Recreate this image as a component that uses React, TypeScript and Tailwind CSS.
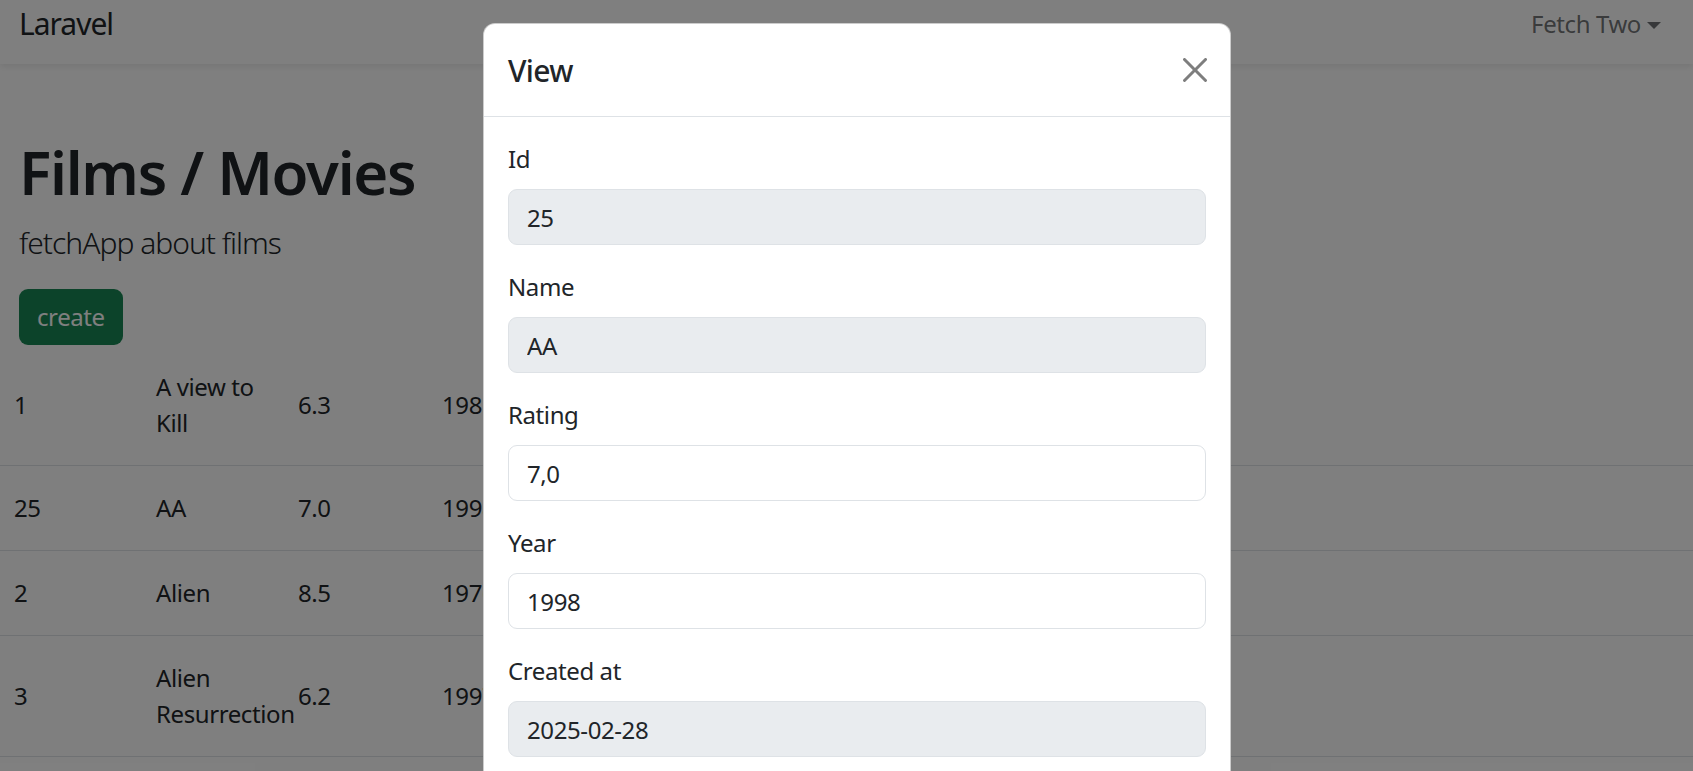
import React from 'react'

type Film = { id: number; name: string; rating: string; year: number }

const films: Film[] = [
    { id: 1, name: 'A view to Kill', rating: '6.3', year: 1985 },
    { id: 25, name: 'AA', rating: '7.0', year: 1998 },
    { id: 2, name: 'Alien', rating: '8.5', year: 1976 },
    { id: 3, name: 'Alien Resurrection', rating: '6.2', year: 1997 },
]

const fields = [
    { label: 'Id', value: '25', readOnly: true },
    { label: 'Name', value: 'AA', readOnly: true },
    { label: 'Rating', value: '7,0', readOnly: false },
    { label: 'Year', value: '1998', readOnly: false },
    { label: 'Created at', value: '2025-02-28', readOnly: true },
]

const App: React.FC = () => {
    return (
        <div
            className="relative h-[771px] overflow-hidden bg-white tracking-[-0.4px] text-[#212529]"
            style={{ fontFamily: '"Noto Sans", "Open Sans", sans-serif' }}
        >
            {/* navbar */}
            <nav className="relative z-10 flex h-[64px] items-start justify-between bg-white pl-[19px] pr-[32px] shadow-[0_3px_6px_rgba(0,0,0,0.075)]">
                <span className="pt-[9px] text-[30px] leading-[30px] tracking-[-1px]">Laravel</span>
                <button className="flex items-center pt-[6px] text-[24px] leading-[36px] text-[#212529]/65">
                    Fetch Two
                    <span className="ml-[6px] mt-[2px] h-0 w-0 border-x-[7px] border-t-[7px] border-x-transparent border-t-[#212529]/65"></span>
                </button>
            </nav>

            {/* page */}
            <main>
                <div className="pl-[19px]">
                    <h1 className="mt-[72px] mb-[12px] text-[60px] font-semibold leading-[72px] tracking-[-1.3px]">
                        Films / Movies
                    </h1>
                    <p className="mb-[24px] text-[30px] font-light leading-[45px] tracking-[-1px]">fetchApp about films</p>
                    <button className="h-[56px] rounded-[9px] bg-[#198754] px-[18px] text-[24px] leading-[36px] text-white">
                        create
                    </button>
                </div>

                <div className="w-full">
                    {films.map((film) => (
                        <div key={film.id} className="flex border-b border-[#dee2e6] text-[24px] leading-[36px]">
                            <div className="flex w-[142px] shrink-0 items-center py-[24px] pl-[14px]">{film.id}</div>
                            <div className="flex w-[142px] shrink-0 items-center py-[24px] pl-[14px]">{film.name}</div>
                            <div className="flex w-[144px] shrink-0 items-center py-[24px] pl-[14px]">{film.rating}</div>
                            <div className="flex w-[142px] shrink-0 items-center py-[24px] pl-[14px]">{film.year}</div>
                        </div>
                    ))}
                </div>
            </main>

            {/* backdrop + modal */}
            <div className="absolute inset-0 z-20 bg-black/50">
                <div className="ml-[483px] mt-[23px] w-[748px] rounded-[12px] border border-black/20 bg-white">
                    <div className="flex h-[93px] items-center justify-between border-b border-[#dee2e6] px-[24px]">
                        <h5 className="text-[30px] font-medium leading-[45px] tracking-[-0.6px]">View</h5>
                        <button className="mr-[-1px] opacity-50">
                            <svg width="24" height="24" viewBox="0 0 16 16" fill="#000">
                                <path d="M.293.293a1 1 0 0 1 1.414 0L8 6.586 14.293.293a1 1 0 1 1 1.414 1.414L9.414 8l6.293 6.293a1 1 0 0 1-1.414 1.414L8 9.414l-6.293 6.293a1 1 0 0 1-1.414-1.414L6.586 8 .293 1.707a1 1 0 0 1 0-1.414z" />
                            </svg>
                        </button>
                    </div>
                    <div className="p-[24px]">
                        {fields.map((f) => (
                            <div key={f.label} className="mb-[24px]">
                                <label className="mb-[12px] block text-[24px] leading-[36px]">{f.label}</label>
                                <input
                                    readOnly
                                    value={f.value}
                                    className={`block h-[56px] w-full rounded-[9px] border border-[#dee2e6] px-[18px] text-[24px] leading-[36px] tracking-[-0.4px] text-[#212529] outline-none ${
                                        f.readOnly ? 'bg-[#e9ecef]' : 'bg-white'
                                    }`}
                                />
                            </div>
                        ))}
                    </div>
                </div>
            </div>
        </div>
    )
}

export default App
